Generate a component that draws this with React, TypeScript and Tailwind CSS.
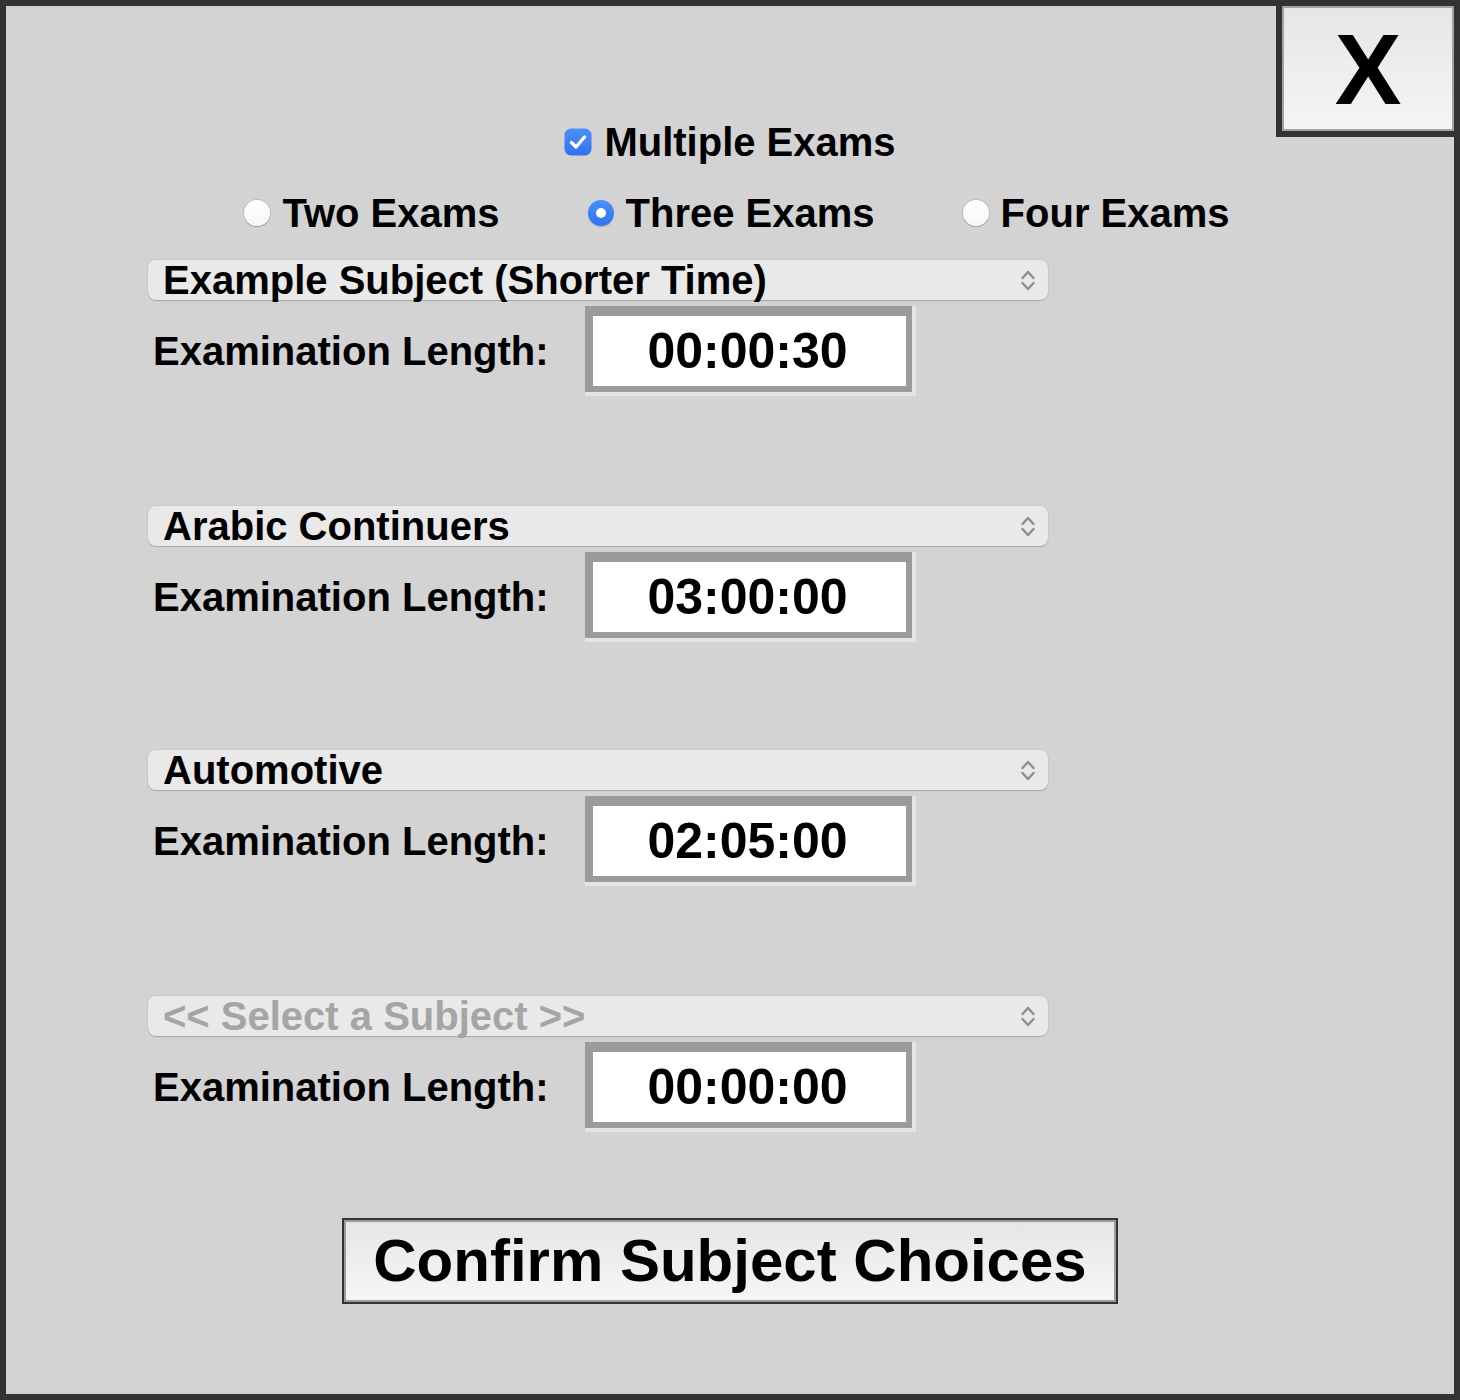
import React from "react";

function Chevrons() {
  return (
    <svg width="16" height="24" viewBox="0 0 16 24" fill="none" stroke="#8e8e8e" strokeWidth="2.4" strokeLinecap="round" strokeLinejoin="round">
      <path d="M2.5 10 L8 4 L13.5 10" />
      <path d="M2.5 15 L8 21 L13.5 15" />
    </svg>
  );
}

function Radio({ checked }: { checked?: boolean }) {
  if (checked) {
    return (
      <span className="flex items-center justify-center w-[26px] h-[26px] rounded-full bg-linear-to-b from-[#4a8ff8] to-[#2f74f2] shadow-[0_1px_1px_rgba(0,0,0,0.2)]">
        <span className="w-[10px] h-[10px] rounded-full bg-white" />
      </span>
    );
  }
  return (
    <span className="block w-[26px] h-[26px] rounded-full bg-linear-to-b from-[#ffffff] to-[#f6f6f6] shadow-[0_0_0_1px_rgba(0,0,0,0.10),0_1px_1px_rgba(0,0,0,0.18)]" />
  );
}

function Section({ subject, time, placeholder, className }: { subject: string; time: string; placeholder?: boolean; className?: string }) {
  return (
    <div className={"flex flex-col " + (className ?? "")}>
      <div className="flex items-center justify-between h-[40px] pl-[15px] pr-[12px] rounded-[8px] bg-[#e9e9e9] shadow-[0_0_0_1px_rgba(0,0,0,0.04),0_1px_1px_rgba(0,0,0,0.18)]">
        <span className={"text-[40px] leading-[40px] whitespace-nowrap " + (placeholder ? "text-[#a5a5a5]" : "text-black")}>{subject}</span>
        <Chevrons />
      </div>
      <div className="flex items-center mt-[6px]">
        <span className="w-[437px] pl-[5px] text-[40px] leading-[44px] whitespace-nowrap">Examination Length:</span>
        <div className="border-r-[4px] border-b-[4px] border-[#e4e4e4]">
          <div className="flex items-center justify-center w-[327px] h-[86px] border-t-[10px] border-l-[8px] border-r-[6px] border-b-[6px] border-[#9b9b9b] bg-white">
            <span className="text-[50px] leading-none pr-[4px]">{time}</span>
          </div>
        </div>
      </div>
    </div>
  );
}

export default function App() {
  return (
    <div className="relative w-[1460px] h-[1400px] box-border border-[6px] border-[#333333] bg-[#d3d3d3] font-['Liberation_Sans',Arial,sans-serif] font-bold text-black">
      <button className="absolute top-[-6px] right-[-6px] w-[184px] h-[137px] border-[6px] border-[#333333] p-0">
        <div className="flex items-center justify-center w-full h-full border-2 border-[#a3a3a3] bg-linear-to-b from-[#e6e6e6] to-[#f5f5f5]">
          <span className="text-[100px] leading-none font-bold">X</span>
        </div>
      </button>

      <div className="pt-[114px]">
        <div className="flex items-center justify-center gap-[12px] h-[44px]">
          <svg width="28" height="28" viewBox="0 0 28 28">
            <defs>
              <linearGradient id="cb" x1="0" y1="0" x2="0" y2="1">
                <stop offset="0" stopColor="#4b90f8" />
                <stop offset="1" stopColor="#2f72f1" />
              </linearGradient>
            </defs>
            <rect x="0.5" y="0.5" width="27" height="27" rx="6.5" fill="url(#cb)" />
            <path d="M7.5 14.5 L12 19 L20.5 9" fill="none" stroke="white" strokeWidth="3.4" strokeLinecap="round" strokeLinejoin="round" />
          </svg>
          <span className="text-[40px] leading-[44px]">Multiple Exams</span>
        </div>

        <div className="flex items-center justify-center gap-[88px] h-[44px] mt-[27px] pl-[14px]">
          <label className="flex items-center gap-[12px]">
            <Radio />
            <span className="text-[40px] leading-[44px]">Two Exams</span>
          </label>
          <label className="flex items-center gap-[12px]">
            <Radio checked />
            <span className="text-[40px] leading-[44px]">Three Exams</span>
          </label>
          <label className="flex items-center gap-[12px]">
            <Radio />
            <span className="text-[40px] leading-[44px]">Four Exams</span>
          </label>
        </div>

        <div className="ml-[142px] w-[900px] mt-[25px] flex flex-col">
          <Section subject="Example Subject (Shorter Time)" time="00:00:30" />
          <Section className="mt-[110px]" subject="Arabic Continuers" time="03:00:00" />
          <Section className="mt-[108px]" subject="Automotive" time="02:05:00" />
          <Section className="mt-[110px]" subject="<< Select a Subject >>" time="00:00:00" placeholder />
        </div>

        <div className="flex justify-center mt-[86px]">
          <button className="w-[776px] h-[86px] border-2 border-[#333333] p-0">
            <div className="flex items-center justify-center w-full h-full border-2 border-[#9c9c9c] bg-linear-to-b from-[#e6e6e6] to-[#f6f6f6]">
              <span className="text-[60px] leading-none font-bold">Confirm Subject Choices</span>
            </div>
          </button>
        </div>
      </div>
    </div>
  );
}
